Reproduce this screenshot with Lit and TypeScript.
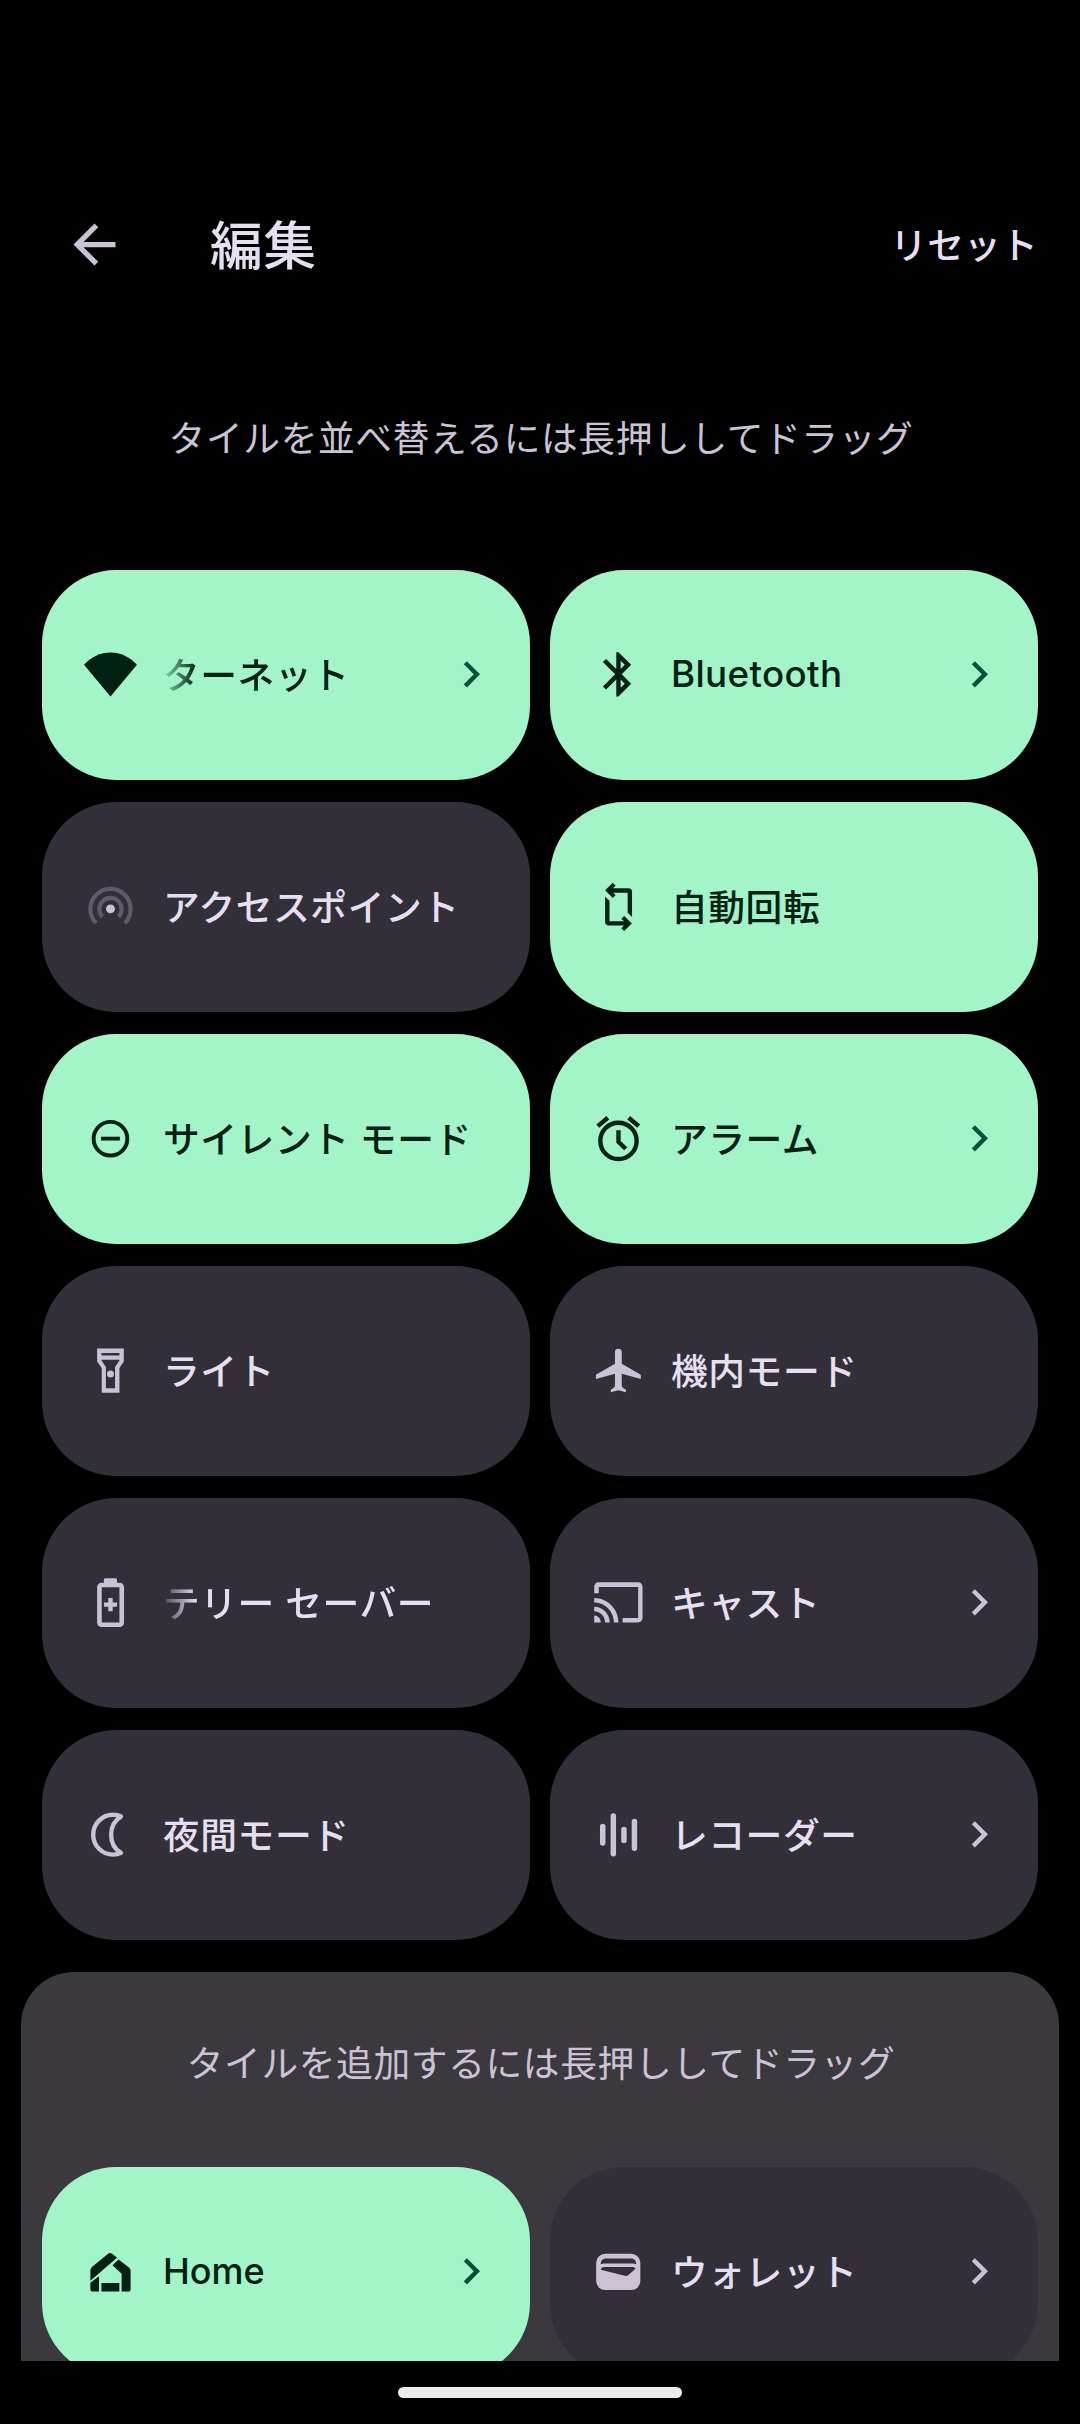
import { LitElement, html, css, svg, nothing, SVGTemplateResult } from "lit";
import { customElement, property } from "lit/decorators.js";
import { classMap } from "lit/directives/class-map.js";

interface Tile {
  icon: string;
  label: string;
  active?: boolean;
  more?: boolean;
  faded?: boolean;
  latin?: boolean;
  tight?: boolean;
}

const ICONS: Record<string, SVGTemplateResult> = {
  wifi: svg`<path d="M0 7.7C3.3 4 7.5 2 12.1 2s8.8 2 12.1 5.7L12.1 22.2z"/>`,
  bluetooth: svg`<path d="M17.9 7.71 12.1 1.9h-1v7.69L6.41 5 5 6.41 10.59 12 5 17.59 6.41 19 11.1 14.41V22.2h1l5.8-5.91-4.3-4.29 4.3-4.29zM13.1 5.83l1.88 1.88L13.1 9.59V5.83zm1.88 10.46L13.1 18.17v-3.76l1.88 1.88z"/>`,
  hotspot: svg`<g fill="none" stroke="currentColor" stroke-width="1.9" opacity=".3"><path d="M5.5 19.7A9.2 9.2 0 1 1 18.7 19.7"/><path d="M8.4 16.8A5.1 5.1 0 1 1 15.8 16.8"/></g><circle cx="12.1" cy="13.2" r="2.05"/>`,
  rotate: svg`<path d="M6 4.7 9.5 1.3l1.3 1.3-1.2 1.2H16.6a1.7 1.7 0 0 1 1.7 1.7v11.4l-2-1.9V5.8H9.6l1.2 1.1-1.3 1.3z"/><path d="M18.2 19.9 14.7 23.3l-1.3-1.3 1.2-1.2H7.7A1.7 1.7 0 0 1 6 19.1V7.6l2 1.9v9.3h6.6l-1.2-1.1 1.3-1.3z"/>`,
  dnd: svg`<circle cx="12.1" cy="12.2" r="7.7" fill="none" stroke="currentColor" stroke-width="1.8"/><path d="M7.8 11.3h8.6v1.75H7.8z"/>`,
  alarm: svg`<path d="M22 5.72l-4.6-3.86-1.29 1.53 4.6 3.86L22 5.72zM7.88 3.39 6.6 1.86 2 5.71l1.29 1.53 4.59-3.85z"/><circle cx="12.1" cy="13.2" r="8.3" fill="none" stroke="currentColor" stroke-width="2"/><path d="M12.1 8.3v5.3l3.3 3.2" fill="none" stroke="currentColor" stroke-width="2"/>`,
  flashlight: svg`<path d="M18.2 2H6v6l2.1 3v11.3h8.1V11l2-3V2zm-2 2.1v1.1H8V4.1h8.2zM14.2 10.5V20.2H10v-9.7l-2-3V7.2h8.2v.3z"/><circle cx="12.1" cy="13.7" r="1.6"/>`,
  battery: svg`<path fill-rule="evenodd" d="M9.8 1h4.6c.4 0 .7.3.7.7V3.1h1.2a2 2 0 0 1 2 2v16.2a2 2 0 0 1-2 2H8a2 2 0 0 1-2-2V5.1a2 2 0 0 1 2-2h1.1V1.7c0-.4.3-.7.7-.7zM8.1 5.1v16.1h8.1V5.1z"/><path d="M11.1 10.1h2v2h2v2h-2v2h-2v-2h-2v-2h2z"/>`,
  airplane: svg`<path d="M22.3 16v-2l-8.7-5V3.7a1.55 1.55 0 0 0-3.1 0V9l-8.7 5v2l8.7-2.4v5.2c0 .6-.4 1-.9 1.4l-1 .7v1.2l3.45-1 3.45 1v-1.2l-1-.7c-.5-.4-.9-.8-.9-1.4v-5.2z"/>`,
  cast: svg`<path d="M21.1 2.9H3c-1.1 0-2 .9-2 2v3h2.1V5h18v14.2h-7.1v2h7.1c1.1 0 2-.9 2-2V4.9c0-1.1-.9-2-2-2zM1 18.1v3.1h3c0-1.66-1.34-3.1-3-3.1zm0-4v2c2.76 0 5 2.34 5 5.1h2.1c0-3.87-3.23-7.1-7.1-7.1zm0-4v2c4.97 0 9 4.13 9 9.1h2.1c0-6.08-5.03-11.1-11.1-11.1z"/>`,
  moon: svg`<path fill="none" stroke="currentColor" stroke-width="2" stroke-linejoin="round" d="M13.3 3.1c1.3 0 2.5.2 3.6.8-2.9 1.7-4.5 4.9-4.5 8.3s1.6 6.6 4.5 8.3c-1.1.6-2.3.8-3.6.8a9.1 9.1 0 0 1 0-18.2z"/>`,
  recorder: svg`<path fill="none" stroke="currentColor" stroke-width="2.5" stroke-linecap="round" d="M4.9 8.5v7.5M9.75 3.7v17.2M14.6 9.8v5.1M19.4 6.2v12.2"/>`,
  home: svg`<path d="M2.9 16.3V12c0-.9.3-1.6 1-2.2L11 4c.6-.5 1.3-.5 1.9 0l2.2 1.8zM15.8 6.6l4.6 3.6c.6.5.9 1.1.9 1.9v8.1c0 .7-.4 1.1-1.1 1.1h-3V13.1L13 9.3zM2.9 17.2l3.95-2.9v7H4c-.7 0-1.1-.4-1.1-1.1zM7.95 17.4h8.2v3.9h-8.2z"/>`,
  wallet: svg`<path fill-rule="evenodd" d="M6 4h12a4.1 4.1 0 0 1 4.1 4.1v8.4a4.1 4.1 0 0 1-4.1 4.1H6a4.1 4.1 0 0 1-4.1-4.1V8.1A4.1 4.1 0 0 1 6 4zM4 8.8c.5-.3 1-.4 1.6-.4h12.9c.6 0 1.2.1 1.7.4C20.2 7.2 19.3 6.2 18 6.2H6.2C5 6.2 4 7.2 4 8.8zM5.5 10.1c-.7 0-1.3.5-1.5 1.2l11 2.8c.6.1 1.1 0 1.5-.3l3.4-2.9c-.3-.5-.8-.8-1.5-.8z"/>`,
};

const CURRENT: Tile[] = [
  { icon: "wifi", label: "ターネット", active: true, more: true, faded: true },
  { icon: "bluetooth", label: "Bluetooth", active: true, more: true, latin: true },
  { icon: "hotspot", label: "アクセスポイント" },
  { icon: "rotate", label: "自動回転", active: true },
  { icon: "dnd", label: "サイレント モード", active: true },
  { icon: "alarm", label: "アラーム", active: true, more: true },
  { icon: "flashlight", label: "ライト" },
  { icon: "airplane", label: "機内モード" },
  { icon: "battery", label: "テリー セーバー", faded: true },
  { icon: "cast", label: "キャスト", more: true },
  { icon: "moon", label: "夜間モード" },
  { icon: "recorder", label: "レコーダー", more: true },
];

const AVAILABLE: Tile[] = [
  { icon: "home", label: "Home", active: true, more: true, latin: true, tight: true },
  { icon: "wallet", label: "ウォレット", more: true },
];

@customElement("qs-tile")
export class QsTile extends LitElement {
  @property({ attribute: false }) tile!: Tile;

  static styles = css`
    :host {
      display: block;
    }
    .tile {
      box-sizing: border-box;
      height: 210px;
      padding: 0 33px 2px 42px;
      border-radius: 74px;
      display: flex;
      align-items: center;
      background: #322f38;
      color: #e6dff1;
    }
    .tile.active {
      background: #a3f4c8;
      color: #002114;
    }
    .icon,
    .chevron {
      flex: none;
      width: 52.5px;
      height: 52.5px;
      fill: currentColor;
      overflow: visible;
      color: #ccc2d6;
    }
    .active .icon {
      color: #002114;
    }
    .active .chevron {
      color: #005139;
    }
    .label {
      flex: 1;
      min-width: 0;
      margin-left: 26.5px;
      padding-top: 3px;
      white-space: nowrap;
      font-size: 36.75px;
      line-height: 54px;
      font-weight: 500;
      letter-spacing: 0.55px;
    }
    .latin {
      padding-top: 0;
      font-weight: 450;
      letter-spacing: 0.35px;
    }
    .tight {
      font-size: 36px;
      letter-spacing: -0.05px;
    }
    .faded {
      -webkit-mask-image: linear-gradient(90deg, rgba(0, 0, 0, 0.15), #000 34px);
      mask-image: linear-gradient(90deg, rgba(0, 0, 0, 0.15), #000 34px);
    }
  `;

  render() {
    const { icon, label, active, more, faded, latin, tight } = this.tile;
    return html`
      <div class=${classMap({ tile: true, active: !!active })}>
        <svg class="icon" viewBox="0 0 24 24">${ICONS[icon]}</svg>
        <span
          class=${classMap({ label: true, faded: !!faded, latin: !!latin, tight: !!tight })}
          >${label}</span
        >
        ${more
          ? html`<svg class="chevron" viewBox="0 0 24 24">
              <path d="M10 6 8.59 7.41 13.17 12l-4.58 4.59L10 18l6-6z" />
            </svg>`
          : nothing}
      </div>
    `;
  }
}

@customElement("app-root")
export class AppRoot extends LitElement {
  static styles = css`
    :host {
      display: flex;
      flex-direction: column;
      box-sizing: border-box;
      width: 1080px;
      height: 2424px;
      overflow: hidden;
      background: #000;
      color: #e6dff1;
      font-family: Inter, "Noto Sans CJK JP", sans-serif;
    }
    .content {
      height: 2361px;
      flex: none;
      overflow: hidden;
    }
    .toolbar {
      margin-top: 170px;
      height: 148px;
      padding: 0 42px 0 63px;
      display: flex;
      align-items: center;
    }
    .back {
      width: 63px;
      height: 63px;
      fill: #ccc2d6;
    }
    .title {
      flex: 1;
      margin: 0 0 0 84px;
      padding-top: 3px;
      font-size: 52.5px;
      line-height: 76px;
      font-weight: 500;
      letter-spacing: 1px;
    }
    .reset {
      padding-top: 4px;
      font-size: 36.75px;
      line-height: 54px;
      font-weight: 500;
      letter-spacing: 0.2px;
    }
    .hint {
      margin: 0;
      text-align: center;
      font-size: 36.75px;
      line-height: 54px;
      letter-spacing: 0.6px;
      text-indent: 2px;
      color: #ccc2d6;
    }
    .hint.top {
      padding: 94px 0 104px;
    }
    .grid {
      display: grid;
      grid-template-columns: 488px 488px;
      gap: 22px 20px;
      justify-content: center;
    }
    .panel {
      margin: 32px 21px 0;
      height: 500px;
      border-radius: 53px 53px 0 0;
      background: #3b383e;
    }
    .panel .hint {
      padding: 65px 0 76px;
    }
    .nav {
      flex: 1;
      display: flex;
      justify-content: center;
      align-items: center;
    }
    .pill {
      width: 284px;
      height: 11px;
      border-radius: 5.5px;
      background: #ebebeb;
    }
  `;

  private grid(tiles: Tile[]) {
    return html`<div class="grid">
      ${tiles.map((t) => html`<qs-tile .tile=${t}></qs-tile>`)}
    </div>`;
  }

  render() {
    return html`
      <div class="content">
        <header class="toolbar">
          <svg class="back" viewBox="0 0 24 24">
            <path d="M20 11H7.83l5.59-5.59L12 4l-8 8 8 8 1.41-1.41L7.83 13H20v-2z" />
          </svg>
          <h1 class="title">編集</h1>
          <span class="reset">リセット</span>
        </header>
        <p class="hint top">タイルを並べ替えるには長押ししてドラッグ</p>
        ${this.grid(CURRENT)}
        <section class="panel">
          <p class="hint">タイルを追加するには長押ししてドラッグ</p>
          ${this.grid(AVAILABLE)}
        </section>
      </div>
      <div class="nav"><div class="pill"></div></div>
    `;
  }
}
